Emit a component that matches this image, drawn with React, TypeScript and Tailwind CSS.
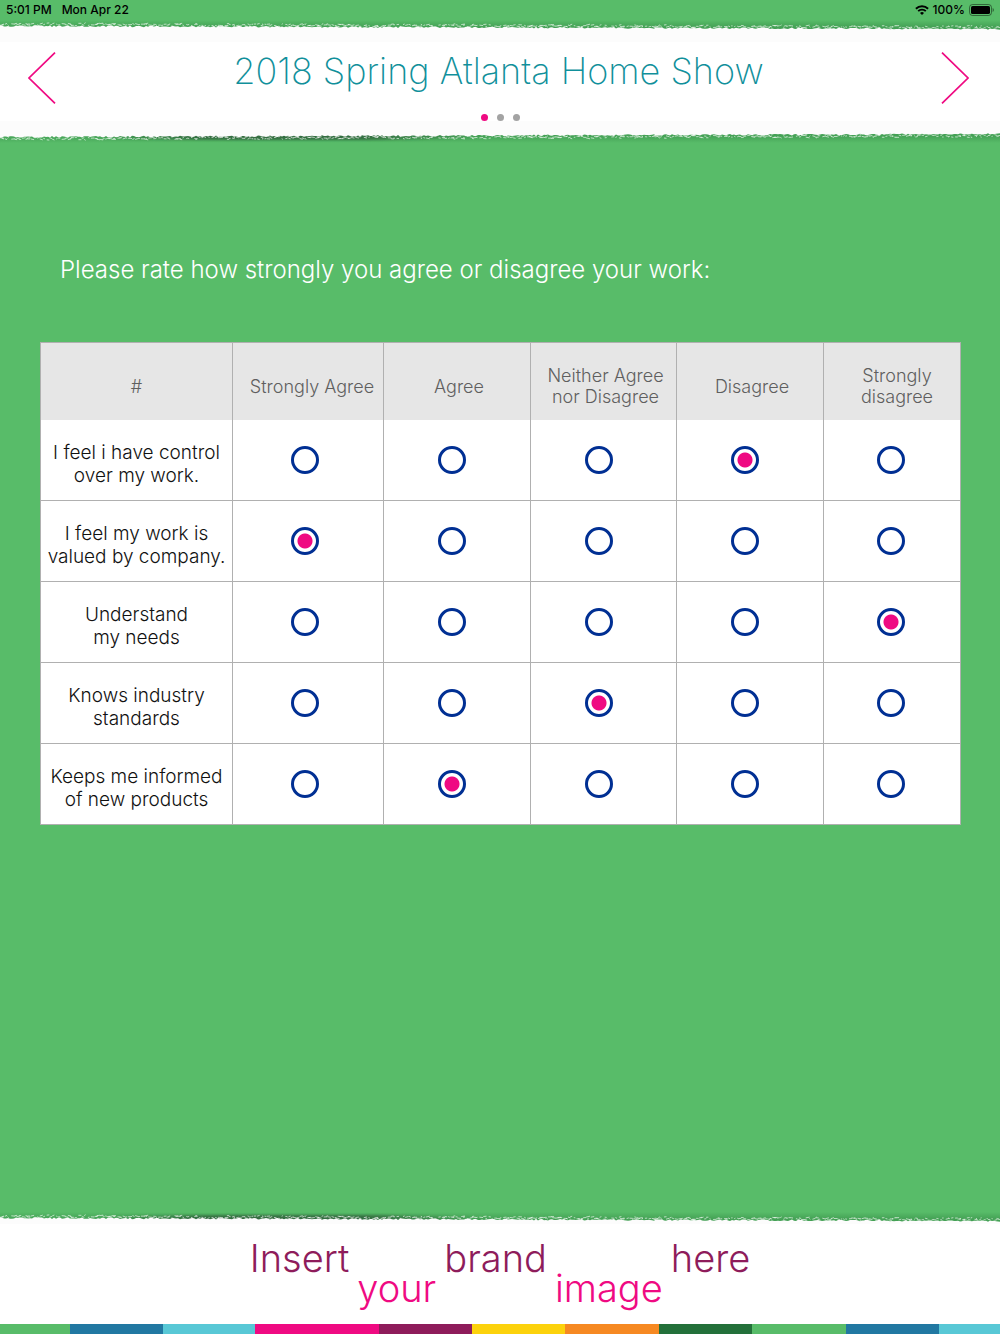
import React, { useState } from "react";

const TITLE = "2018 Spring Atlanta Home Show";

const COLUMNS = [
  { label: ["Strongly Agree"], head: "w-[151px] pl-2", cell: "pr-1.5" },
  { label: ["Agree"], head: "w-[147px] pl-1", cell: "pr-2.5" },
  { label: ["Neither Agree", "nor Disagree"], head: "w-[146px] pl-1", cell: "pr-2.5" },
  { label: ["Disagree"], head: "w-[147px] pl-1", cell: "pr-2.5" },
  { label: ["Strongly", "disagree"], head: "w-[137px] pl-2.5", cell: "pr-0.5" },
];

const ROWS = [
  ["I feel i have control", "over my work."],
  ["I feel my work is", "valued by company."],
  ["Understand", "my needs"],
  ["Knows industry", "standards"],
  ["Keeps me informed", "of new products"],
];

const STRIPES = [
  { color: "bg-[#58bc69]", grow: 70 },
  { color: "bg-[#2178a2]", grow: 93 },
  { color: "bg-[#58c8d6]", grow: 92 },
  { color: "bg-[#ef0a82]", grow: 124 },
  { color: "bg-[#8e1c5b]", grow: 93 },
  { color: "bg-[#fcd20c]", grow: 93 },
  { color: "bg-[#f68922]", grow: 94 },
  { color: "bg-[#23703a]", grow: 93 },
  { color: "bg-[#58bc69]", grow: 94 },
  { color: "bg-[#2178a2]", grow: 93 },
  { color: "bg-[#58c8d6]", grow: 61 },
];

// Repeatable pseudo-random numbers, so that the paper edge never flickers.
function makeRandom(seed: number) {
  let s = seed;
  return () => {
    s = (s * 16807) % 2147483647;
    return s / 2147483647;
  };
}

// Height of the paper edge at x: it drops slowly from left to right.
function edgeY(x: number) {
  return 6 + (3 * x) / 1000;
}

function paperPath() {
  const rnd = makeRandom(913);
  let d = "M0 12";
  for (let x = 0; x <= 1000; x += 2) {
    d += ` L${x} ${(edgeY(x) + (rnd() - 0.5) * 1.6).toFixed(1)}`;
  }
  return d + " L1000 12 Z";
}

function fibrePath() {
  const rnd = makeRandom(4021);
  let d = "";
  for (let x = 0; x < 1000; x += 1 + rnd() * 3) {
    const y = edgeY(x) - 0.6 - rnd() * 2.4;
    d += `M${x.toFixed(1)} ${y.toFixed(1)}l${(1 + rnd() * 3).toFixed(1)} ${((rnd() - 0.5) * 2).toFixed(1)}`;
  }
  return d;
}

const PAPER = paperPath();
const FIBRES = fibrePath();

function TornEdge({ id, flip = false, dark = false }: { id: string; flip?: boolean; dark?: boolean }) {
  return (
    <svg
      viewBox="0 0 1000 12"
      preserveAspectRatio="none"
      className={flip ? "block h-3 w-full -scale-y-100" : "block h-3 w-full"}
      aria-hidden="true"
    >
      <defs>
        <linearGradient id={`${id}-fade`} x1="0" y1="0" x2="0" y2="1">
          <stop offset="0" stopColor="#3f9a50" stopOpacity="0" />
          <stop offset="0.6" stopColor="#3f9a50" stopOpacity="0.8" />
        </linearGradient>
        <linearGradient id={`${id}-dark`} gradientUnits="userSpaceOnUse" x1="0" y1="0" x2="1000" y2="0">
          <stop offset="0.1" stopColor="#2c5637" stopOpacity="0" />
          <stop offset="0.2" stopColor="#2c5637" stopOpacity="0.7" />
          <stop offset="0.36" stopColor="#2c5637" stopOpacity="0.7" />
          <stop offset="0.48" stopColor="#2c5637" stopOpacity="0" />
        </linearGradient>
        <filter id={`${id}-soft`} x="-5%" y="-60%" width="110%" height="220%">
          <feGaussianBlur stdDeviation="1" />
        </filter>
      </defs>
      <rect width="1000" height="12" fill={`url(#${id}-fade)`} />
      {dark && <path d="M90 4 L240 3 L380 3 L490 5 L490 10 L90 10 Z" fill={`url(#${id}-dark)`} filter={`url(#${id}-soft)`} />}
      <path d={FIBRES} fill="none" stroke="#ffffff" strokeWidth="0.9" strokeOpacity="0.7" />
      <path d={PAPER} fill="#fcfcfc" />
    </svg>
  );
}

function StatusBar() {
  return (
    <div className="flex h-5 items-center justify-between px-1.5 text-[12px] font-medium leading-5 text-black">
      <div className="flex gap-2.5">
        <span>5:01 PM</span>
        <span>Mon Apr 22</span>
      </div>
      <div className="flex items-center gap-1">
        <svg viewBox="0 0 14 10" className="h-[10px] w-[14px]" fill="none" stroke="#000" strokeWidth="1.9" aria-label="Wi-Fi">
          <path d="M0.9 3.8 A8.7 8.7 0 0 1 13.1 3.8" />
          <path d="M3.2 6.2 A5.4 5.4 0 0 1 10.8 6.2" />
          <path d="M7 9.9 L5 7.9 A2.9 2.9 0 0 1 9 7.9 Z" fill="#000" stroke="none" />
        </svg>
        <span>100%</span>
        <svg viewBox="0 0 25 12" className="h-3 w-[25px]" aria-label="Battery full">
          <rect x="0.5" y="0.5" width="22" height="11" rx="3" fill="none" stroke="#000" strokeOpacity="0.45" />
          <rect x="2" y="2" width="19" height="8" rx="1.6" fill="#000" />
          <path d="M23.6 4 Q25 4.6 25 6 Q25 7.4 23.6 8 Z" fill="#000" fillOpacity="0.45" />
        </svg>
      </div>
    </div>
  );
}

function Arrow({ next = false }: { next?: boolean }) {
  return (
    <button type="button" aria-label={next ? "Next page" : "Previous page"} className="h-[52px] w-7 cursor-pointer">
      <svg viewBox="0 0 28 52" className="h-[52px] w-7" fill="none" stroke="#ef0a82" strokeWidth="1.7">
        <path d={next ? "M1 0.6 L27 26 L1 51.4" : "M27 0.6 L1 26 L27 51.4"} />
      </svg>
    </button>
  );
}

function Lines({ text }: { text: string[] }) {
  return (
    <>
      {text.map((line) => (
        <span key={line} className="block whitespace-nowrap">
          {line}
        </span>
      ))}
    </>
  );
}

export default function App() {
  const [answers, setAnswers] = useState([3, 0, 4, 2, 1]);
  const [page, setPage] = useState(0);

  return (
    <div className="flex min-h-screen flex-col bg-[#58bc69] font-[Inter,'Liberation_Sans',sans-serif] font-light">
      <StatusBar />

      <header>
        <TornEdge id="head-top" />
        <div className="border-t-10 border-b-10 border-[#fcfcfc] bg-white">
          <div className="flex items-center justify-between pt-2.5 pr-[31px] pl-7">
            <Arrow />
            <h1 className="pb-3.5 text-[36px] font-extralight leading-9 text-[#11909b]">{TITLE}</h1>
            <Arrow next />
          </div>
          <div className="flex justify-center gap-[9px] pt-2.5">
            {[0, 1, 2].map((n) => (
              <button
                key={n}
                type="button"
                aria-label={`Page ${n + 1}`}
                onClick={() => setPage(n)}
                className={n === page ? "size-[7px] rounded-full bg-[#ef0a82]" : "size-[7px] rounded-full bg-[#a3a3a3]"}
              />
            ))}
          </div>
        </div>
        <TornEdge id="head-bottom" flip dark />
      </header>

      <main className="flex-1 px-10 pt-[111px]">
        <h2 className="px-5 text-[24px] font-light leading-8 text-white">
          Please rate how strongly you agree or disagree your work:
        </h2>

        <table className="mt-14 w-full table-fixed border-collapse border border-[#b0b0b0] bg-white text-center">
          <thead>
            <tr className="h-[77px] bg-[#e6e6e6] text-[18px] leading-[21px] text-[#5f5f5f]">
              <th scope="col" className="w-[192px] border-r border-[#b0b0b0] pt-2.5 font-light">
                #
              </th>
              {COLUMNS.map((c) => (
                <th key={c.label[0]} scope="col" className={`border-r border-[#b0b0b0] pt-2.5 font-light ${c.head}`}>
                  <Lines text={c.label} />
                </th>
              ))}
            </tr>
          </thead>
          <tbody>
            {ROWS.map((row, r) => (
              <tr key={row[0]} className="h-[81px] border-b border-[#b0b0b0]">
                <th scope="row" className="border-r border-[#b0b0b0] pt-2 text-[19px] font-light leading-[23px] text-[#111]">
                  <Lines text={row} />
                </th>
                {COLUMNS.map((c, i) => (
                  <td key={c.label[0]} className={`border-r border-[#b0b0b0] ${c.cell}`}>
                    <input
                      type="radio"
                      name={`row-${r}`}
                      aria-label={`${row.join(" ")} ${c.label.join(" ")}`}
                      checked={answers[r] === i}
                      onChange={() => setAnswers(answers.map((a, k) => (k === r ? i : a)))}
                      className="mx-auto block size-7 appearance-none rounded-full border-3 border-[#002f93] bg-white checked:bg-[radial-gradient(circle,#ef0a82_7px,#ffffff_8px)]"
                    />
                  </td>
                ))}
              </tr>
            ))}
          </tbody>
        </table>
      </main>

      <footer>
        <TornEdge id="foot-top" dark />
        <div className="flex h-[100px] justify-center bg-white pt-3 text-[38px] font-light leading-[44px] text-[#8e1c5b]">
          <span>Insert</span>
          <span className="mt-[30px] px-2 text-[#ef0a82]">your</span>
          <span>brand</span>
          <span className="mt-[30px] px-2 text-[#ef0a82]">image</span>
          <span>here</span>
        </div>
        <div className="flex h-2.5">
          {STRIPES.map((s, i) => (
            <div key={i} className={s.color} style={{ flexGrow: s.grow, flexBasis: 0 }} />
          ))}
        </div>
      </footer>
    </div>
  );
}
